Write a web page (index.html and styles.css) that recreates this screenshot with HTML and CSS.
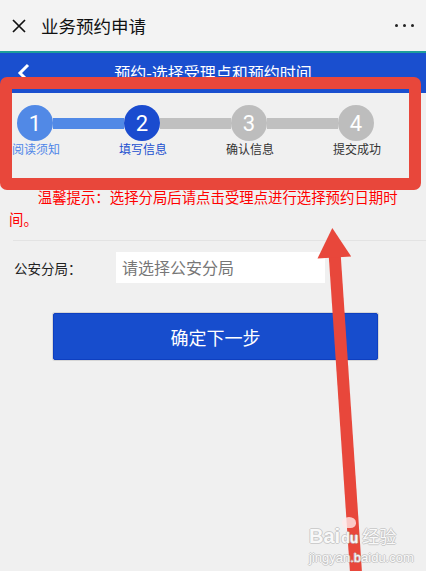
FILE: index.html
```html
<!DOCTYPE html>
<html lang="zh-CN">
<head>
<meta charset="utf-8">
<title>业务预约申请</title>
<link rel="stylesheet" href="styles.css">
</head>
<body>
<div class="page">
  <div class="topbar">
    <svg class="close" width="14" height="14" viewBox="0 0 14 14"><path d="M1 1 L13 13 M13 1 L1 13" stroke="#111" stroke-width="1.7" fill="none"/></svg>
    <div class="app-title">业务预约申请</div>
    <div class="dots"><span></span><span></span><span></span></div>
  </div>
  <div class="teal"></div>
  <div class="header">
    <svg class="back" width="14" height="20" viewBox="0 0 14 20"><path d="M11 2 L3 10 L11 18" stroke="#fff" stroke-width="3" fill="none"/></svg>
    <div class="header-title">预约-选择受理点和预约时间</div>
  </div>

  <div class="stepper">
    <div class="track">
      <div class="circle done">1</div>
      <div class="conn done"></div>
      <div class="circle active">2</div>
      <div class="conn"></div>
      <div class="circle">3</div>
      <div class="conn"></div>
      <div class="circle">4</div>
    </div>
    <div class="labels">
      <div class="lbl done">阅读须知</div>
      <div class="lbl active">填写信息</div>
      <div class="lbl">确认信息</div>
      <div class="lbl">提交成功</div>
    </div>
  </div>

  <p class="tip">温馨提示：选择分局后请点击受理点进行选择预约日期时间。</p>
  <div class="divider"></div>

  <div class="form-row">
    <div class="form-label">公安分局：</div>
    <div class="select">请选择公安分局</div>
  </div>

  <div class="btn-wrap">
    <div class="btn">确定下一步</div>
  </div>

  <div class="annot-box"></div>
  <svg class="annot-arrow" width="426" height="571" viewBox="0 0 426 571">
    <line x1="334.5" y1="252" x2="356.5" y2="580" stroke="#e8473b" stroke-width="12"/>
    <polygon points="332.3,228 317.5,258.5 351.2,256.5" fill="#e8473b"/>
  </svg>

  <div class="watermark">
    <div class="wm-logo"><span class="wm-b">Bai</span><span class="wm-du">du<span class="paw"></span></span><span class="wm-cn">经验</span></div>
    <div class="wm-url">jingyan.baidu.com</div>
  </div>
</div>
</body>
</html>
```
FILE: styles.css
```css
* { box-sizing: border-box; }
html, body { margin: 0; padding: 0; }
body {
  width: 426px;
  height: 571px;
  overflow: hidden;
  background: #f0f0f0;
  font-family: "Noto Sans CJK SC", "Noto Sans", sans-serif;
}
.page { position: relative; width: 426px; height: 571px; }

.topbar {
  height: 51px;
  background: #f3f3f3;
  display: flex;
  align-items: center;
}
.close { margin-left: 12px; }
.app-title {
  margin-left: 15px;
  font-size: 17.5px;
  color: #111;
  line-height: 24px;
}
.dots { margin-left: auto; margin-right: 12px; display: flex; gap: 4.5px; }
.dots span { width: 3.5px; height: 3.5px; border-radius: 50%; background: #222; }

.teal { height: 2px; background: #1f9e9a; }

.header {
  height: 40px;
  background: #1a4fcf;
  position: relative;
  display: flex;
  align-items: flex-start;
  justify-content: center;
  padding-top: 8px;
}
.back { position: absolute; left: 17px; top: 10px; }
.header-title { color: #fff; font-size: 16px; line-height: 22px; }

.stepper { padding-top: 12px; }
.track {
  display: flex;
  align-items: center;
  padding-left: 17px;
}
.circle {
  width: 36px;
  height: 36px;
  border-radius: 50%;
  background: #bdbdbd;
  color: #fff;
  font-family: Roboto, "Noto Sans", sans-serif;
  font-size: 22px;
  display: flex;
  align-items: center;
  justify-content: center;
  flex: none;
}
.circle.done { background: #5189e6; }
.circle.active { background: #1a4bcf; }
.conn { width: 71px; height: 11px; background: #c0c0c0; flex: none; }
.conn.done { background: #5189e6; }

.labels {
  display: flex;
  gap: 71px;
  padding-left: 18px;
  margin-top: 1px;
}
.lbl {
  width: 36px;
  display: flex;
  justify-content: center;
  white-space: nowrap;
  font-size: 12px;
  line-height: 14px;
  color: #333;
}
.lbl.done { color: #4f86e8; }
.lbl.active { color: #1a4fcf; }

.tip {
  margin: 30px 0 0 0;
  padding: 0 21px 0 9px;
  font-size: 14.4px;
  line-height: 22px;
  text-indent: 2em;
  color: #ff0000;
}
.divider {
  margin: 10px 0 0 13px;
  height: 1px;
  background: #e3e3e3;
}

.form-row {
  display: flex;
  align-items: center;
  margin-top: 11px;
  padding-left: 14px;
}
.form-label {
  width: 102px;
  font-size: 13.5px;
  color: #222;
}
.select {
  width: 209px;
  height: 31px;
  background: #fff;
  padding-left: 6px;
  font-size: 16px;
  line-height: 31px;
  color: #777;
}

.btn-wrap { padding-left: 53px; margin-top: 30px; }
.btn {
  width: 325px;
  height: 47px;
  background: #174dcd;
  border: 1px solid #0e3fc0;
  box-shadow: 0 0 0 1px #d6d6d6;
  border-radius: 2px;
  color: #fff;
  font-size: 18px;
  display: flex;
  align-items: center;
  justify-content: center;
}

.annot-box {
  position: absolute;
  left: 0;
  top: 77px;
  width: 421px;
  height: 113px;
  border: 12px solid #e8473b;
  border-radius: 7px;
}
.annot-arrow { position: absolute; left: 0; top: 0; }

.watermark {
  position: absolute;
  left: 309px;
  top: 524px;
  color: rgba(255,255,255,0.92);
  text-shadow: 1px 0 0 rgba(190,190,190,0.7), -1px 0 0 rgba(190,190,190,0.7), 0 1px 0 rgba(190,190,190,0.7), 0 -1px 0 rgba(190,190,190,0.7);
}
.wm-logo { display: flex; align-items: baseline; font-family: "Liberation Sans", Arial, sans-serif; font-weight: bold; font-size: 20px; line-height: 24px; }
.wm-du { position: relative; font-size: 14px; margin-left: 1px; }
.paw {
  position: absolute;
  left: 1px;
  top: -9px;
  width: 14px;
  height: 11px;
  border-radius: 50% 50% 40% 40%;
  background: rgba(255,235,235,0.8);
}
.wm-cn { font-family: "Noto Sans CJK SC", sans-serif; font-weight: normal; font-size: 17px; margin-left: 4px; }
.wm-url { font-family: "Liberation Sans", Arial, sans-serif; font-size: 13px; line-height: 16px; margin-top: 0; }
```
